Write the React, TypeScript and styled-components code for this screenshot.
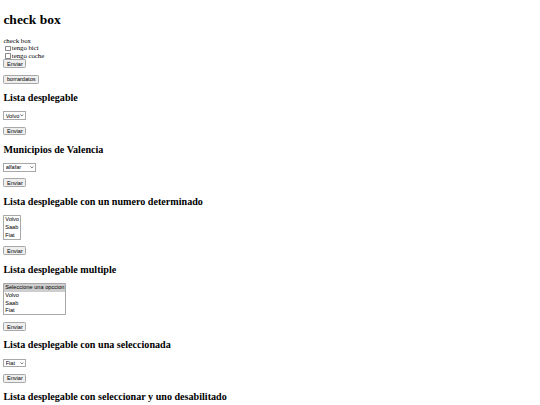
import React from "react";
import styled, { createGlobalStyle } from "styled-components";

const Global = createGlobalStyle`
  html {
    zoom: 0.421875;
    overflow: hidden;
  }
  body {
    margin: 8px;
    font-family: "Liberation Serif", "Times New Roman", serif;
    font-size: 16px;
    color: #000;
    background: #fff;
    overflow: hidden;
  }
`;

const Title = styled.h1`
  font-size: 32px;
  font-weight: bold;
  margin: 21.44px 0;
`;

const Section = styled.h2`
  font-size: 24px;
  font-weight: bold;
  margin: 19.92px 0;
`;

const Form = styled.form`
  margin: 0;
`;

const Para = styled.p`
  margin: 16px 0;
`;

const Check = styled.input.attrs({ type: "checkbox" })`
  appearance: none;
  width: 13px;
  height: 13px;
  margin: 3px 3px 0 4px;
  border: 1px solid #8a8a8a;
  border-radius: 2px;
  background: #fff;
  vertical-align: -1px;
  box-sizing: border-box;
`;

const Button = styled.button`
  font-family: "Liberation Sans", Arial, sans-serif;
  font-size: 13.333px;
  line-height: normal;
  padding: 1px 6px;
  border: 1px solid #a8a8a8;
  border-radius: 3px;
  background: #efefef;
  color: #000;
  margin: 0;
`;

const DropWrap = styled.span`
  position: relative;
  display: inline-block;
  vertical-align: baseline;
`;

const Drop = styled.select<{ $w: number }>`
  appearance: none;
  font-family: "Liberation Sans", Arial, sans-serif;
  font-size: 13.333px;
  width: ${(p) => p.$w}px;
  height: 20px;
  padding: 0 0 0 3px;
  border: 1px solid #a8a8a8;
  border-radius: 0;
  background: #fff;
  color: #000;
  margin: 0;
`;

const Arrow = styled.svg`
  position: absolute;
  right: 5px;
  top: 7px;
  width: 9px;
  height: 6px;
  pointer-events: none;
`;

const ListBox = styled.select`
  font-family: "Liberation Sans", Arial, sans-serif;
  font-size: 13.333px;
  border: 1px solid #a8a8a8;
  padding: 0;
  margin: 0;
  background: #fff;
  color: #000;
  overflow: hidden;
  outline: none;
  option {
    padding: 1px 2px;
    line-height: 15.33px;
  }
  option:checked {
    background: #cecece;
    color: #000;
  }
`;

function Dropdown({ w, def, options }: { w: number; def: string; options: string[] }) {
  return (
    <DropWrap>
      <Drop $w={w} defaultValue={def}>
        {options.map((o) => (
          <option key={o} value={o}>
            {o}
          </option>
        ))}
      </Drop>
      <Arrow viewBox="0 0 9 6">
        <path d="M1 1 L4.5 4.5 L8 1" fill="none" stroke="#333" strokeWidth="1.6" />
      </Arrow>
    </DropWrap>
  );
}

const stop = (e: React.FormEvent) => e.preventDefault();

export default function App() {
  return (
    <>
      <Global />
      <Title>check box</Title>
      <Form onSubmit={stop}>
        check box
        <br />
        <Check name="bici" />
        tengo bici
        <br />
        <Check name="coche" />
        tengo coche
        <br />
        <Button type="submit">Enviar</Button>
      </Form>
      <Para>
        <Button type="button">borrardatos</Button>
      </Para>

      <Section>Lista desplegable</Section>
      <Form onSubmit={stop}>
        <Para>
          <Dropdown w={54} def="Volvo" options={["Volvo", "Saab", "Fiat", "Audi"]} />
        </Para>
        <Para>
          <Button type="submit">Enviar</Button>
        </Para>
      </Form>

      <Section>Municipios de Valencia</Section>
      <Form onSubmit={stop}>
        <Para>
          <Dropdown w={78} def="alfafar" options={["alfafar", "burjassot", "catarroja", "paiporta"]} />
        </Para>
        <Para>
          <Button type="submit">Enviar</Button>
        </Para>
      </Form>

      <Section>Lista desplegable con un numero determinado</Section>
      <Form onSubmit={stop}>
        <Para>
          <ListBox size={3}>
            <option value="volvo">Volvo</option>
            <option value="saab">Saab</option>
            <option value="fiat">Fiat</option>
          </ListBox>
        </Para>
        <Para>
          <Button type="submit">Enviar</Button>
        </Para>
      </Form>

      <Section>Lista desplegable multiple</Section>
      <Form onSubmit={stop}>
        <Para>
          <ListBox multiple size={4} defaultValue={["sel"]}>
            <option value="sel">Seleccione una opccion</option>
            <option value="volvo">Volvo</option>
            <option value="saab">Saab</option>
            <option value="fiat">Fiat</option>
          </ListBox>
        </Para>
        <Para>
          <Button type="submit">Enviar</Button>
        </Para>
      </Form>

      <Section>Lista desplegable con una seleccionada</Section>
      <Form onSubmit={stop}>
        <Para>
          <Dropdown w={54} def="Fiat" options={["Volvo", "Saab", "Fiat", "Audi"]} />
        </Para>
        <Para>
          <Button type="submit">Enviar</Button>
        </Para>
      </Form>

      <Section>Lista desplegable con seleccionar y uno desabilitado</Section>
      <Form onSubmit={stop}>
        <Para>
          <Dropdown w={100} def="Seleccionar" options={["Seleccionar", "Volvo", "Saab", "Fiat"]} />
        </Para>
      </Form>
    </>
  );
}
